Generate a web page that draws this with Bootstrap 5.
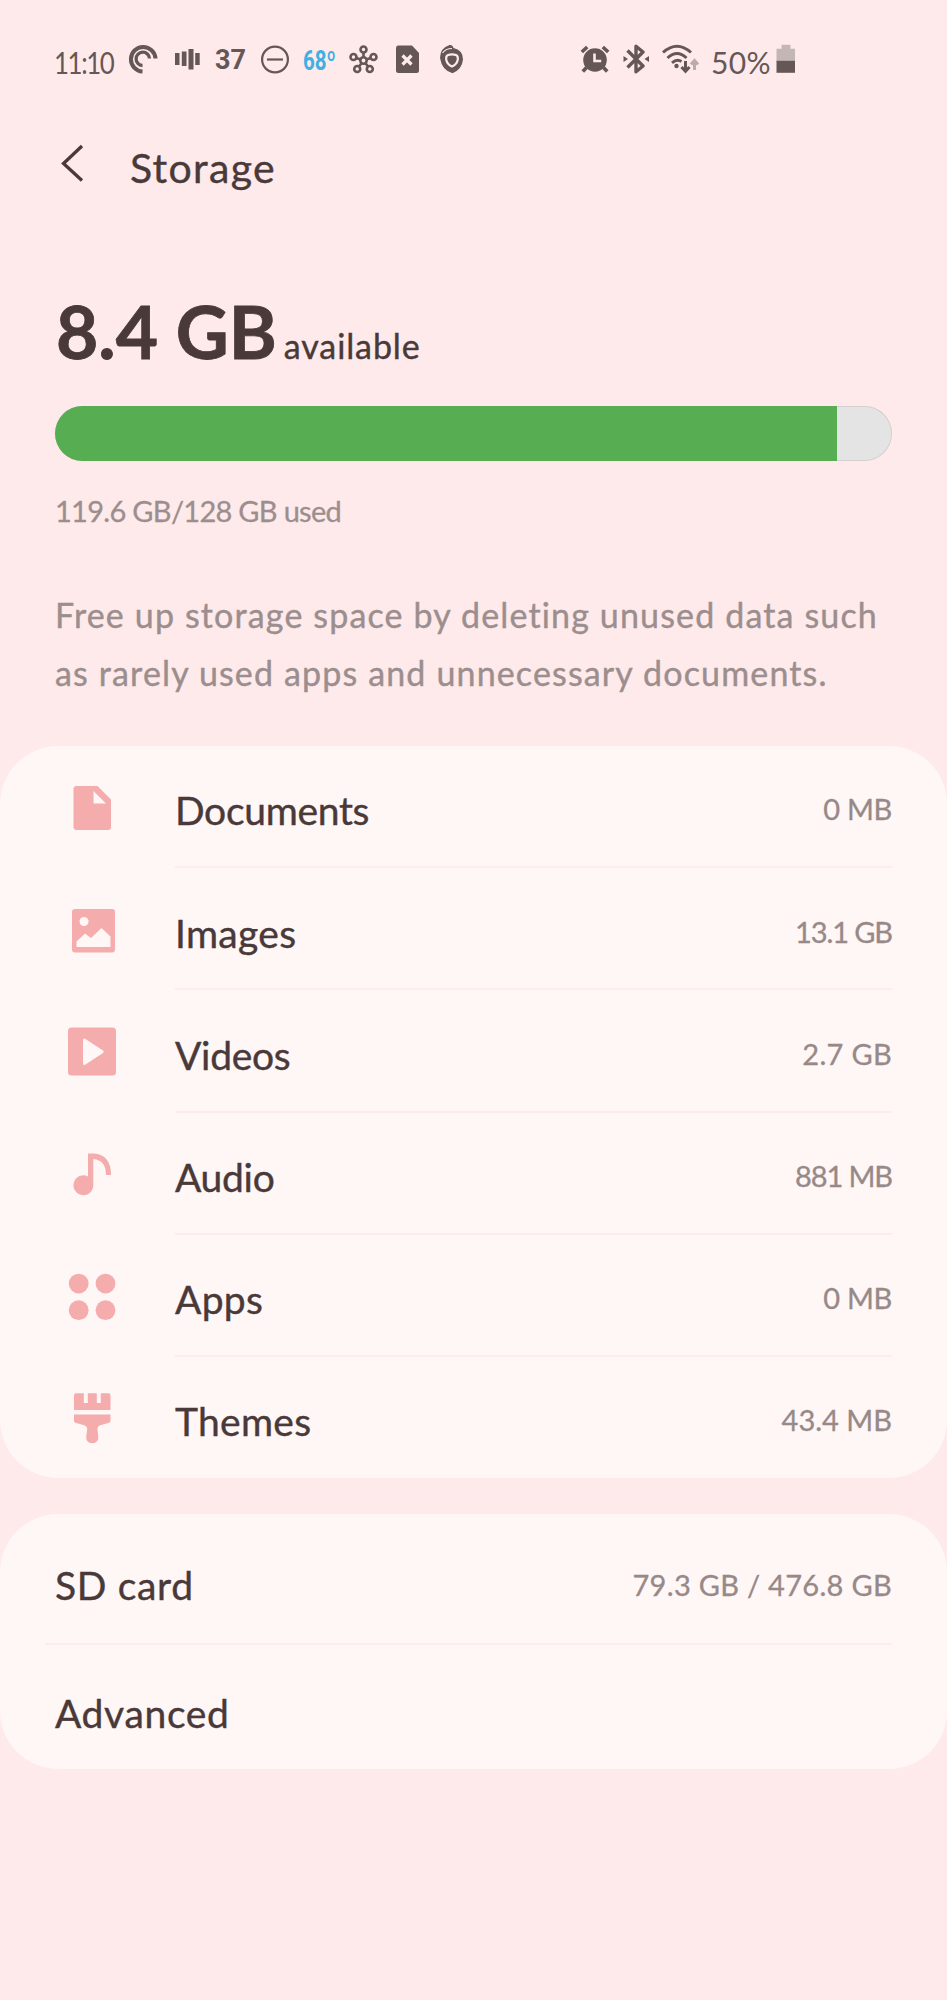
<!DOCTYPE html>
<html lang="en">
<head>
<meta charset="utf-8">
<meta name="viewport" content="width=device-width, initial-scale=1">
<title>Storage</title>
<link href="https://cdn.jsdelivr.net/npm/bootstrap@5.3.0/dist/css/bootstrap.min.css" rel="stylesheet">
<style>
body{background:#feeaea;color:#493939;font-family:Lato,"Open Sans",sans-serif;min-height:2000px;overflow-x:hidden;font-variant-ligatures:none}
.status{display:grid;grid-template-columns:74px 47px 40px 45px 43px 46px 46px 44px 141px 43px 38px 50px 65px 30px;padding:44px 0 0 54px;height:74px;color:#665757;line-height:30px;white-space:nowrap}
.status svg{display:block;height:30px}
.clock{font-size:30px;padding-top:3px;letter-spacing:-1.6px;transform:scaleX(.86);transform-origin:left}
.level{font-size:30px;padding-top:3px;letter-spacing:.4px}
.temp{font:700 27px/30px Roboto,sans-serif;color:#3fb0e0;transform:scaleX(.76);transform-origin:left;padding-top:2px}
.num{font:700 27px/30px Roboto,sans-serif;padding-top:1px}
.appbar{height:112px;padding:20px 0 0 60px}
.title{font-size:41px;line-height:50px;margin:49px 0 0 44px;letter-spacing:1.3px}
.title,.name,.avail,.hint{-webkit-text-stroke:.4px currentColor}
.used,.val{-webkit-text-stroke:.3px currentColor}
.summary{padding:105px 55px 0}
.free{font-size:73px;line-height:80px;font-weight:700;height:80px;-webkit-text-stroke:.8px currentColor}
.free>span:first-child{margin-left:1px}
.avail{font-size:34px;margin-left:7px;letter-spacing:.9px}
.meter{height:55px;border-radius:28px;background:#e4e4e4;box-shadow:inset 0 0 0 1px #d8cfcf;margin-top:35px}
.meter .progress-bar{background:#56ad52}
.used{font-size:29px;line-height:36px;margin-top:32px;color:#9c8e8e;letter-spacing:-.7px}
.hint{font-size:34px;line-height:58.3px;margin:57px 0 43.4px;color:#9c8e8e;white-space:nowrap;letter-spacing:1.15px}
.panel{background:#fff6f6;border-radius:58px;margin-bottom:36.500px}
.categories{padding:0 55px 0 64px}
.extras{padding:0 55px 0 45px}
.item{display:grid;grid-template-columns:111px 1fr;height:122.2px}
.item:last-child{height:121px}
.item>svg{width:56px;height:56px;margin-top:33px;fill:#f5acad}
.line{border-bottom:2px solid #fdeced}
.item:last-child .line{border:0}
.name{font-size:39px;line-height:48px;padding-top:40.400px;letter-spacing:.3px}
.val{font-size:29px;line-height:40px;color:#968988;padding-top:43.400px}
.snug{letter-spacing:-1.1px}
.snug-sm{letter-spacing:-.3px}
.wide{letter-spacing:.3px}
.plain{height:130.500px;padding-left:10px}
.plain .name{padding-top:46.500px;letter-spacing:.65px}
.plain .val{padding-top:51px}
.plain:last-child{height:124.500px}
.plain:last-child .name{padding-top:44px}
</style>
</head>
<body>
<div class="status">
<span class="clock">11:10</span>
<svg width="30" viewBox="0 0 30 30" fill="none" stroke="currentColor"><path d="M14.500 27.500A12.300 12.300 0 1 1 27.500 14.500" stroke-width="4"/><path d="M14.500 21.500A6.700 6.700 0 1 1 21.500 14.500" stroke-width="3.300"/></svg>
<svg width="26" viewBox="0 0 26 30" fill="currentColor"><path d="M0 9h4.500v12H0zM6.800 7.500h4.700v14.500H6.800zM13.500 5h5v20.500h-5zM20.200 9h4.500v12h-4.500z"/></svg>
<span class="num">37</span>
<svg width="30" viewBox="0 0 30 30" fill="none" stroke="currentColor" stroke-width="2.200"><circle cx="15" cy="15.500" r="12.900"/><path d="M7 15.500h16"/></svg>
<span class="temp">68º</span>
<svg width="30" viewBox="0 0 30 30" fill="none" stroke="currentColor" stroke-width="2.600"><circle cx="14.500" cy="16.500" r="3.200"/><circle cx="14.500" cy="5.500" r="3"/><circle cx="4.500" cy="13" r="3"/><circle cx="24.500" cy="13" r="3"/><circle cx="8.200" cy="25" r="3"/><circle cx="20.800" cy="25" r="3"/><path d="M14.500 8.500v5M7.500 14l4 1.500M21.500 14l-4 1.500M10 22.500l2.500-3.300M19 22.500l-2.500-3.300"/></svg>
<svg width="26" viewBox="0 0 26 30"><path d="M3 1.500h14l7 7.500v17.500q0 2.500-2.500 2.500H3.500Q1 29 1 26.500V4q0-2.500 2-2.500z" fill="currentColor"/><path d="M7.500 11.500l9 9M16.500 11.500l-9 9" stroke="#feeaea" stroke-width="3.200"/></svg>
<svg width="26" viewBox="0 0 26 30"><path d="M1 14Q1 4 10.500 1q3-.5 4 3Q24 6 24 15.500 23 25.500 13.500 29.200 3 26.500 1 14z" fill="currentColor"/><path d="M3.500 9Q6.500 4.600 13 4.500" fill="none" stroke="#feeaea" stroke-width="1.200"/><path d="M8.500 11.300q4.500-2 9 0 1.800 1 1.200 4.700-1 4.500-5.700 6.500-4.700-2-5.700-6.500-.6-3.700 1.200-4.700z" fill="none" stroke="#feeaea" stroke-width="2.200"/></svg>
<svg width="30" viewBox="0 0 30 30"><circle cx="15" cy="16" r="11.800" fill="currentColor"/><path d="M1.800 8l5.400-5M28.200 8l-5.400-5M6.500 23.500l-3.700 4M23.500 23.500l3.700 4" stroke="currentColor" stroke-width="3.600"/><path d="M14.500 9.500V17h6.700" fill="none" stroke="#feeaea" stroke-width="2.600"/></svg>
<svg width="28" viewBox="0 0 28 30"><path d="M4.500 6.500L20 22l-7 5.800V2.200L20 8 4.500 23.500" fill="none" stroke="currentColor" stroke-width="3.400" stroke-linejoin="round"/><path d="M.5 12l4.500 3-4.500 3zM26 12l-4.500 3 4.500 3z" fill="currentColor"/></svg>
<svg width="40" viewBox="0 0 40 30" fill="none" stroke="currentColor" stroke-width="3"><path d="M2 8.500Q16-4 30 8.500M6.500 14Q16 5 25.500 14M11 18.800Q16 14.500 20.500 17.500"/><circle cx="15.500" cy="22" r="2.200" fill="currentColor" stroke="none"/><path d="M24.500 17v10M20.500 23l4 4.300 4-4.300"/><path d="M33.500 26V16.500M30 20.500l3.500-4 3.500 4" stroke="#b9abab"/></svg>
<span class="level">50%</span>
<svg width="20" viewBox="0 0 20 30"><path d="M5.500.8h9v4H19v13H.5v-13h5z" fill="#c5b6b6"/><path d="M.5 16.800H19v12H.5z" fill="currentColor"/></svg>
</div>

<header class="appbar d-flex">
<svg width="26" height="100" viewBox="0 0 26 100"><path d="M22 52L3.500 69.500 22 86.500" fill="none" stroke="#493939" stroke-width="3.300"/></svg>
<h1 class="title fw-normal">Storage</h1>
</header>

<section class="summary">
<div class="free d-flex align-items-baseline"><span>8.4 GB</span><span class="avail fw-normal">available</span></div>
<div class="meter progress"><div class="progress-bar" role="progressbar" style="width:93.4%"></div></div>
<div class="used">119.6 GB/128 GB used</div>
<p class="hint">Free up storage space by deleting unused data such<br>as rarely used apps and unnecessary documents.</p>
</section>

<main>
<section class="panel categories">
<div class="item"><svg viewBox="0 0 56 56"><path fill-rule="evenodd" d="M12.500 7h21L47 20.500V48q0 3-3 3H12.500q-3 0-3-3V10q0-3 3-3zM29.500 12v12.500H42z"/></svg><div class="line d-flex justify-content-between"><span class="name snug-sm">Documents</span><span class="val snug-sm">0 MB</span></div></div>
<div class="item"><svg viewBox="0 0 56 56"><path fill-rule="evenodd" d="M11 8h37q3 0 3 3v37.500q0 3-3 3H11q-3 0-3-3V11q0-3 3-3zM20 16a4.500 4.500 0 1 0 .1 0zM12.500 46h34V35.500L37.500 27 27 37l-6-4.500-8.500 8z"/></svg><div class="line d-flex justify-content-between"><span class="name">Images</span><span class="val snug">13.1 GB</span></div></div>
<div class="item"><svg viewBox="0 0 56 56"><path fill-rule="evenodd" d="M7.500 4.600h41q3.500 0 3.500 3.500v41q0 3.500-3.500 3.500h-41Q4 52.600 4 49.100v-41q0-3.500 3.500-3.500zM19 17.500V40q0 3 2.500 1.500L39 30q1.500-1.300 0-2.500L21.500 16Q19 14.500 19 17.500z"/></svg><div class="line d-flex justify-content-between"><span class="name snug-sm">Videos</span><span class="val wide">2.7 GB</span></div></div>
<div class="item"><svg viewBox="0 0 56 56"><path d="M24 7.500h5.500Q47 8.500 47 29h-5Q42 14 29.300 13v26A9.900 9.900 0 1 1 24 30.500z"/></svg><div class="line d-flex justify-content-between"><span class="name snug-sm">Audio</span><span class="val snug">881 MB</span></div></div>
<div class="item"><svg viewBox="0 0 56 56"><circle cx="14.700" cy="15.600" r="9.900"/><circle cx="41.500" cy="15.600" r="9.900"/><circle cx="14.700" cy="42.200" r="9.900"/><circle cx="41.500" cy="42.200" r="9.900"/></svg><div class="line d-flex justify-content-between"><span class="name">Apps</span><span class="val snug-sm">0 MB</span></div></div>
<div class="item"><svg viewBox="0 0 56 56"><path d="M12 3.200h7.800V13h4V3.200h9V13h4V3.200h7.700q2 0 2 2V20H10V5.200q0-2 2-2zM10 24.500h36.500V31q0 1.500-2 2L37 35q-4 1-3.500 4.500L34.200 46q1 7-6 7.200-6.700-.2-5.900-7.200l.9-6.500q.3-3.500-3.700-4.500l-7.500-2q-2-.5-2-2z"/></svg><div class="line d-flex justify-content-between"><span class="name">Themes</span><span class="val">43.4 MB</span></div></div>
</section>
<section class="panel extras">
<div class="plain line d-flex justify-content-between"><span class="name">SD card</span><span class="val wide">79.3 GB / 476.8 GB</span></div>
<div class="plain d-flex"><span class="name">Advanced</span></div>
</section>
</main>
<script src="https://cdn.jsdelivr.net/npm/bootstrap@5.3.0/dist/js/bootstrap.bundle.min.js"></script>
</body>
</html>
